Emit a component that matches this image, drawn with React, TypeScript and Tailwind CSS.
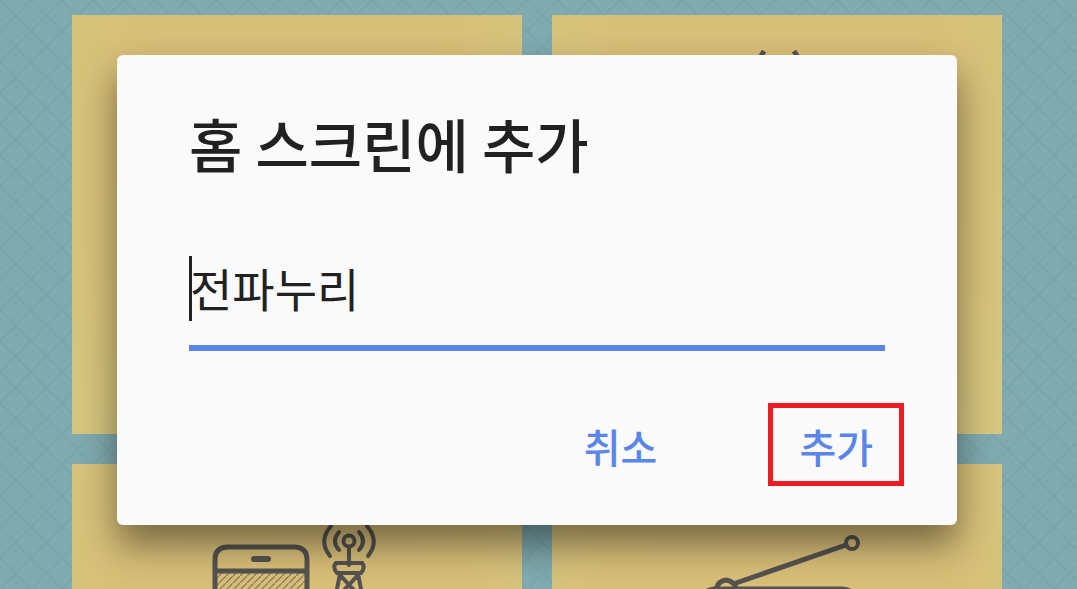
import { useState } from "react";

const tile =
  "h-[419px] bg-[radial-gradient(ellipse_at_50%_30%,#d8be78_0%,#d8bf78_55%,#d5c57e_90%)]";

function Weave() {
  return (
    <svg className="absolute inset-0 h-full w-full" aria-hidden="true">
      <defs>
        <pattern id="weave" width="31" height="31" patternUnits="userSpaceOnUse">
          <path
            d="M-1 -1 32 32M-1 32 32 -1"
            fill="none"
            stroke="#5c9098"
            strokeWidth="2"
            opacity=".17"
          />
          <path
            d="M0 9 22 31M22 0 31 9M0 22 22 0M9 31 31 9"
            fill="none"
            stroke="#5c9098"
            strokeWidth="2"
            opacity=".05"
          />
        </pattern>
      </defs>
      <rect width="100%" height="100%" fill="url(#weave)" />
    </svg>
  );
}

function AntennaTips() {
  return (
    <svg viewBox="0 0 450 419" className="h-full w-full" fill="none" stroke="#55534f" strokeWidth="5" aria-hidden="true">
      <path d="M212 36 206 46M242 36 248 46" />
    </svg>
  );
}

function PhoneAndTower() {
  return (
    <svg
      viewBox="0 0 450 419"
      className="h-full w-full"
      fill="none"
      stroke="#55534f"
      strokeWidth="5"
      strokeLinecap="round"
      aria-hidden="true"
    >
      <defs>
        <pattern id="hatch" width="7" height="7" patternUnits="userSpaceOnUse">
          <path d="M-1 8 8-1" stroke="#55534f" strokeWidth="1.3" opacity=".6" strokeLinecap="butt" />
        </pattern>
      </defs>
      <rect x="143" y="108" width="92" height="150" fill="url(#hatch)" stroke="none" />
      <path d="M143 260V96Q143 83 156 83H222Q235 83 235 96V260M145 107H233" />
      <path d="M182 95H196" strokeWidth="6" />
      <circle cx="277" cy="77" r="5.500" strokeWidth="4" />
      <path d="M277 83V101" strokeWidth="4" />
      <path d="M267 68Q259 77 267 86M287 68Q295 77 287 86M259 62Q246 77 258 92M295 62Q308 77 296 92" strokeWidth="4" />
      <path d="M264 99H290Q294 103 289 109H265Q260 103 264 99Z" strokeWidth="4" />
      <path d="M268 110 258 160M286 110 296 160M268 111 292 137M286 111 262 137" strokeWidth="4" />
    </svg>
  );
}

function Radio() {
  return (
    <svg
      viewBox="0 0 450 419"
      className="h-full w-full"
      fill="none"
      stroke="#55534f"
      strokeWidth="5"
      strokeLinecap="round"
      aria-hidden="true"
    >
      <circle cx="300" cy="79" r="6" strokeWidth="4" />
      <path d="M294 81 184 119" />
      <path d="M164 127Q165 117 174 116 183 117 185 127" />
      <path d="M148 132Q154 126 162 125H290Q302 126 306 135" />
    </svg>
  );
}

export default function App() {
  const [name, setName] = useState("전파누리");

  return (
    <div className="relative h-screen overflow-hidden bg-[#80abaf] font-['Noto_Sans_CJK_KR',sans-serif]">
      <Weave />
      <main className="relative grid grid-cols-2 gap-[30px] pt-[15px] pr-[75px] pl-[72px]">
        <div className={tile} />
        <div className={tile}>
          <AntennaTips />
        </div>
        <div className={tile}>
          <PhoneAndTower />
        </div>
        <div className={tile}>
          <Radio />
        </div>
      </main>

      <div className="absolute inset-0 flex items-start pt-[55px] pr-[120px] pl-[117px]">
        <form
          role="dialog"
          aria-labelledby="dialog-title"
          onSubmit={(e) => e.preventDefault()}
          className="w-full rounded-md bg-[#fafafa] pt-[46px] pb-[39px] shadow-[0_20px_36px_rgba(0,0,0,0.45)]"
        >
          <h1 id="dialog-title" className="px-[72px] text-[58px] leading-[84px] font-medium text-[#212121]">
            홈 스크린에 추가
          </h1>
          <div className="mx-[72px] mt-[71px] flex items-start border-b-[6px] border-[#5a85ea] pb-[24px]">
            <span className="-mr-[2px] h-[65px] w-[3px] shrink-0 bg-[#212121]" />
            <input
              type="text"
              aria-label="이름"
              value={name}
              onChange={(e) => setName(e.target.value)}
              className="h-[65px] min-w-0 flex-1 bg-transparent pb-[2px] text-[46px] text-[#212121] outline-none"
            />
          </div>
          <div className="mt-[52px] flex justify-end gap-[80px] pr-[53px] text-[40px] leading-[70px] font-medium text-[#5a85ea]">
            <button type="button" className="px-[31px] pt-[3px]">
              취소
            </button>
            <button type="submit" className="border-[5px] border-[#ed1c24] px-[26px] pt-[3px]">
              추가
            </button>
          </div>
        </form>
      </div>
    </div>
  );
}
